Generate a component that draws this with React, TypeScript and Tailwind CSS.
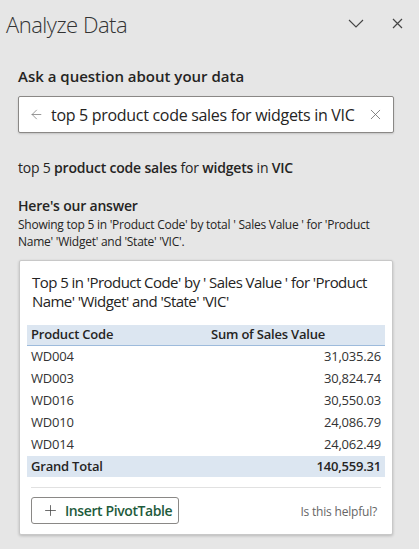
import { ArrowLeft, Plus, X } from 'lucide-react';

const rows = [
  { code: 'WD004', value: '31,035.26' },
  { code: 'WD003', value: '30,824.74' },
  { code: 'WD016', value: '30,550.03' },
  { code: 'WD010', value: '24,086.79' },
  { code: 'WD014', value: '24,062.49' },
];

export default function App() {
  return (
    <div
      className="h-[549px] w-[419px] overflow-hidden bg-[#e6e6e6] text-[#252423]"
      style={{ fontFamily: '"Open Sans", "Noto Sans", sans-serif' }}
    >
      {/* header */}
      <div className="flex h-[50px] items-center justify-between pl-[6px] pr-[16px]">
        <h1 className="-mt-[2px] text-[22px] font-light tracking-[-0.5px] text-[#333]">Analyze Data</h1>
        <div className="-mt-[4px] flex items-center gap-[28px] text-[#444]">
          <svg width="16" height="9" viewBox="0 0 16 9" fill="none" stroke="currentColor" strokeWidth="1.1">
            <path d="M1 1l7 7 7-7" />
          </svg>
          <svg width="11" height="11" viewBox="0 0 11 11" fill="none" stroke="currentColor" strokeWidth="1.2">
            <path d="M1 1l9 9M10 1l-9 9" />
          </svg>
        </div>
      </div>

      <div className="px-[18px]">
        <h2 className="mt-[16px] text-[15px] font-semibold leading-[20px] text-[#252423]">
          Ask a question about your data
        </h2>

        <div className="mt-[10px] flex h-[37px] w-[376px] items-center rounded-[2px] border border-[#8a8886] bg-white pl-[10px] pr-[9px] shadow-[0_1px_2px_rgba(0,0,0,0.15)]">
          <ArrowLeft size={15} strokeWidth={1.2} className="text-[#777]" />
          <span className="ml-[7px] flex-1 whitespace-nowrap text-[16px] tracking-[-0.3px] text-[#252423]">
            top 5 product code sales for widgets in VIC
          </span>
          <X size={17} strokeWidth={1.1} className="text-[#666]" />
        </div>

        <p className="mt-[26px] text-[14px] leading-[18px] tracking-[-0.2px] text-[#252423]">
          top 5 <span className="font-semibold">product code sales</span> for{' '}
          <span className="font-semibold">widgets</span> in <span className="font-semibold">VIC</span>
        </p>

        <h3 className="mt-[20px] text-[14px] font-semibold leading-[18px] tracking-[-0.2px]">Here's our answer</h3>
        <p className="mt-[1px] text-[12px] leading-[17px] tracking-[-0.25px] text-[#252423]">
          Showing top 5 in 'Product Code' by total ' Sales Value ' for 'Product Name' 'Widget' and 'State' 'VIC'.
        </p>

        {/* result card */}
        <div className="mt-[10px] ml-[1px] w-[374px] rounded-[2px] border border-[#c8c8c8] bg-white px-[7px] pb-[10px] pt-[12px] shadow-[0_1px_3px_rgba(0,0,0,0.2)]">
          <p className="px-[5px] text-[15px] leading-[19px] tracking-[-0.55px] text-[#252423]">
            Top 5 in 'Product Code' by ' Sales Value ' for 'Product Name' 'Widget' and 'State' 'VIC'
          </p>

          <div className="mt-[14px] text-[13px] tracking-[-0.2px]">
            <div className="flex h-[21px] items-center border-b border-[#9dbbdc] bg-[#dce6f1] px-[4px] font-semibold">
              <span className="w-[180px]">Product Code</span>
              <span>Sum of Sales Value</span>
            </div>
            {rows.map((r) => (
              <div key={r.code} className="flex h-[22px] items-center justify-between px-[4px] text-[#333]">
                <span>{r.code}</span>
                <span>{r.value}</span>
              </div>
            ))}
            <div className="flex h-[21px] items-center justify-between bg-[#dce6f1] px-[4px] font-semibold">
              <span>Grand Total</span>
              <span>140,559.31</span>
            </div>
          </div>

          <div className="mx-[4px] mt-[10px] border-t border-[#e1e1e1]" />

          <div className="mt-[9px] flex items-center justify-between px-[4px]">
            <button className="flex h-[27px] w-[148px] items-center gap-[6px] whitespace-nowrap rounded-[3px] border border-[#8a8886] pl-[10px] text-[14px] font-semibold tracking-[-0.4px] text-[#1e5b3c]">
              <Plus size={17} strokeWidth={1.1} className="text-[#444]" />
              Insert PivotTable
            </button>
            <span className="mr-[4px] mt-[2px] text-[12px] tracking-[-0.2px] text-[#666]">Is this helpful?</span>
          </div>
        </div>
      </div>
    </div>
  );
}
